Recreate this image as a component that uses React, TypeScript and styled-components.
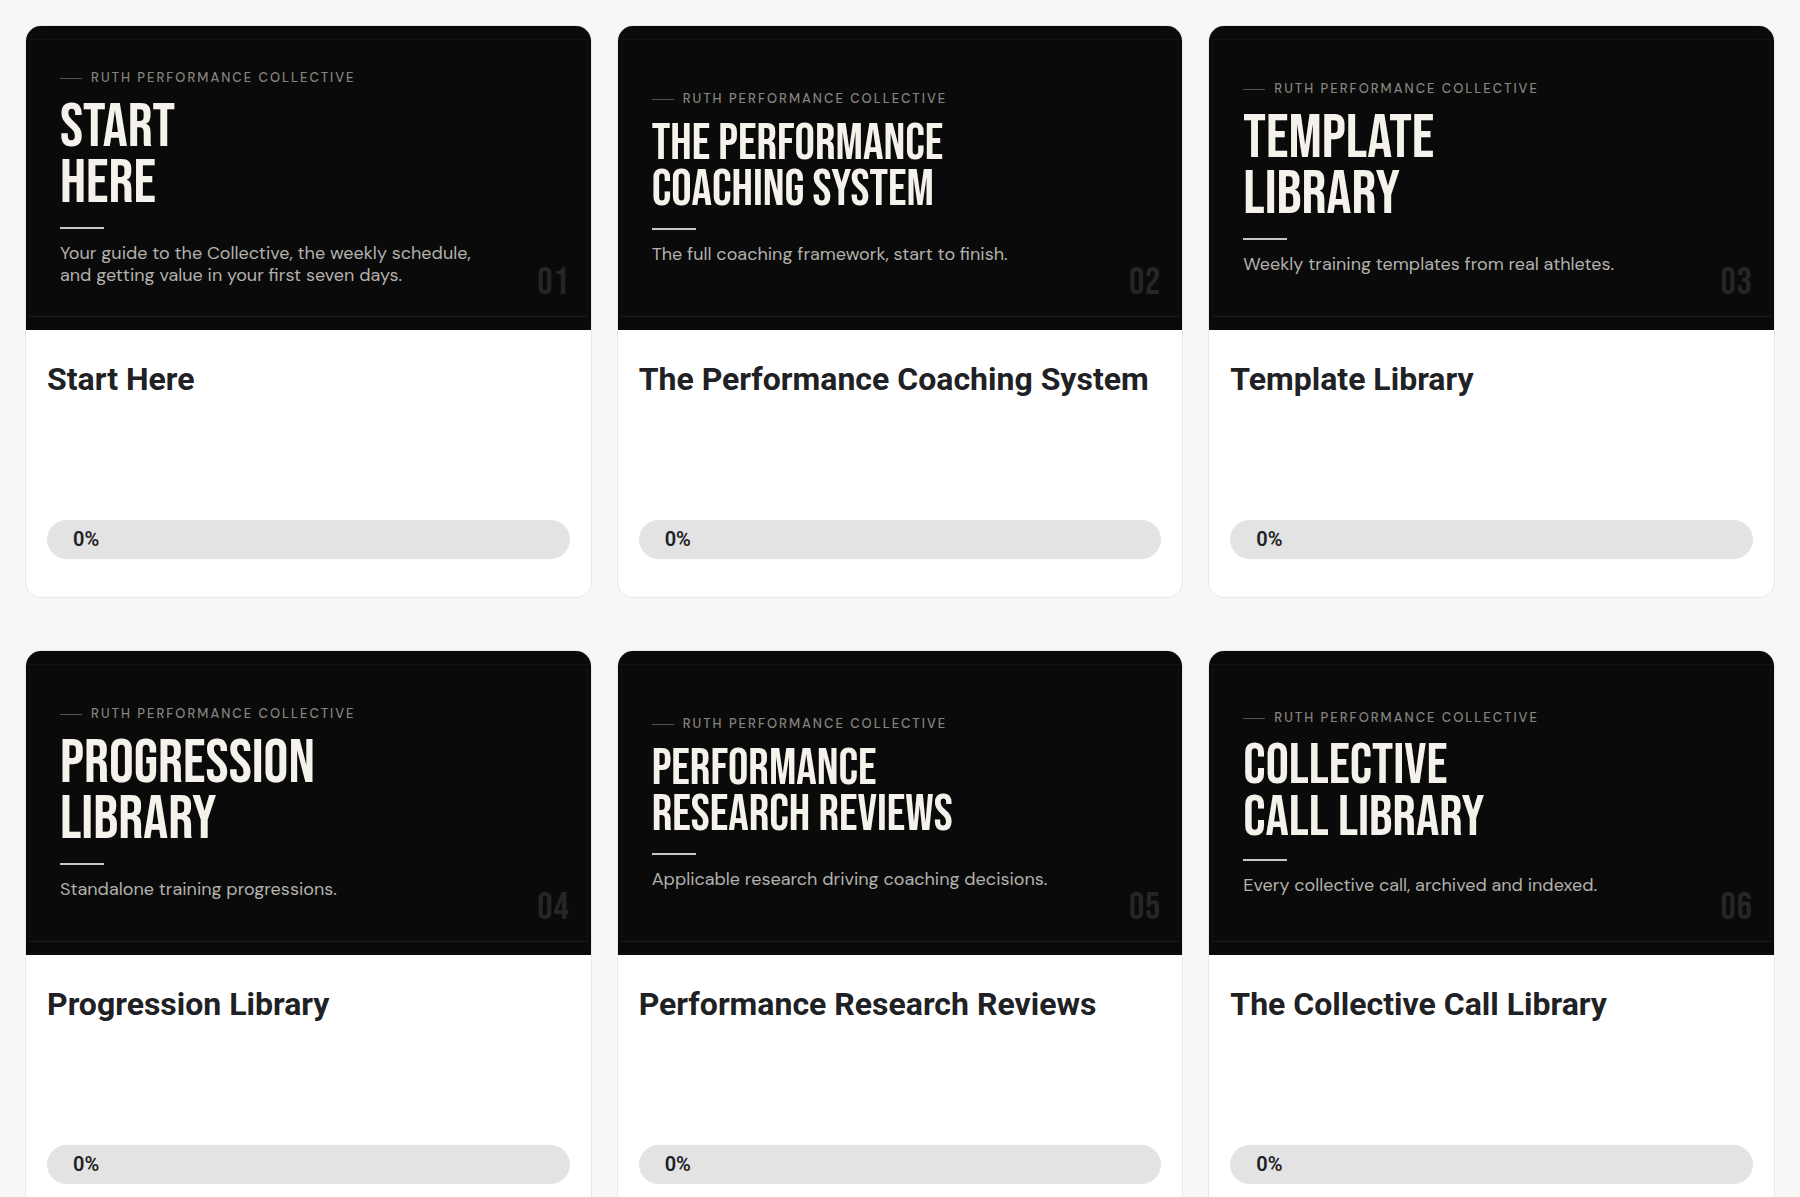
import React from "react";
import styled, { createGlobalStyle } from "styled-components";

const GlobalStyle = createGlobalStyle`
  *, *::before, *::after { box-sizing: border-box; }
  body {
    margin: 0;
    background: #f8f7f5;
    color: #202124;
    font-family: Roboto, "Liberation Sans", sans-serif;
  }
`;

const Grid = styled.main`
  display: grid;
  grid-template-columns: repeat(3, minmax(0, 1fr));
  column-gap: 25px;
  row-gap: 52px;
  padding: 25px;
`;

const Card = styled.article`
  display: flex;
  flex-direction: column;
  overflow: hidden;
  background: #ffffff;
  border: 1px solid #e8e8e7;
  border-radius: 16px;
`;

const Cover = styled.div`
  position: relative;
  aspect-ratio: 13 / 7;
  display: flex;
  flex-direction: column;
  justify-content: center;
  padding: 0 34px;
  background: #0a0a0a;
`;

const Frame = styled.div`
  position: absolute;
  inset: 13px 3px;
  border: 1px solid #121212;
  border-bottom-color: #1c1c1c;
  pointer-events: none;
`;

const Eyebrow = styled.div`
  display: flex;
  align-items: center;
  gap: 9px;
  margin-bottom: 14px;
  color: #85837e;
  font: 500 13px/16px "DM Sans", Inter, sans-serif;
  letter-spacing: 2px;
  text-transform: uppercase;

  &::before {
    content: "";
    width: 22px;
    height: 1px;
    background: #55534f;
  }
`;

type HeadlineSize = "large" | "medium" | "small";

const headlineFont: Record<HeadlineSize, string> = {
  large: "62px/56px",
  medium: "58px/52px",
  small: "51px/46px",
};

const Headline = styled.div<{ $size: HeadlineSize }>`
  color: #f5f2eb;
  font: 400 ${(p) => headlineFont[p.$size]} "Bebas Neue", "Liberation Sans Narrow", sans-serif;
  text-transform: uppercase;
  white-space: pre-line;
`;

const Rule = styled.div`
  width: 44px;
  height: 2px;
  margin: 15px 0 13px;
  background: #c9c7c1;
`;

const Blurb = styled.p`
  margin: 0;
  color: #b3b1ac;
  font: 400 18px/22px "DM Sans", Inter, sans-serif;
  white-space: pre-line;
`;

const Index = styled.span`
  position: absolute;
  right: 21px;
  bottom: 27px;
  color: #262626;
  font: 400 38px/40px "Bebas Neue", "Liberation Sans Narrow", sans-serif;
  letter-spacing: 1px;
`;

const Body = styled.div`
  display: flex;
  flex-direction: column;
  gap: 30px;
  padding: 30px 21px 38px;
`;

const Title = styled.h2`
  min-height: 130px;
  margin: 0;
  font-size: 32px;
  font-weight: 700;
  line-height: 38px;
`;

const Progress = styled.div`
  position: relative;
  overflow: hidden;
  height: 39px;
  border-radius: 20px;
  background: #e3e3e3;
`;

const ProgressFill = styled.div`
  position: absolute;
  inset: 0 auto 0 0;
  background: #c9c7c1;
`;

const ProgressText = styled.span`
  position: relative;
  display: block;
  padding: 0 26px;
  font-size: 20px;
  font-weight: 600;
  line-height: 39px;
`;

interface Course {
  title: string;
  headline: string;
  size: HeadlineSize;
  blurb: string;
  progress: number;
}

const courses: Course[] = [
  {
    title: "Start Here",
    headline: "Start\nHere",
    size: "large",
    blurb: "Your guide to the Collective, the weekly schedule,\nand getting value in your first seven days.",
    progress: 0,
  },
  {
    title: "The Performance Coaching System",
    headline: "The Performance\nCoaching System",
    size: "small",
    blurb: "The full coaching framework, start to finish.",
    progress: 0,
  },
  {
    title: "Template Library",
    headline: "Template\nLibrary",
    size: "large",
    blurb: "Weekly training templates from real athletes.",
    progress: 0,
  },
  {
    title: "Progression Library",
    headline: "Progression\nLibrary",
    size: "large",
    blurb: "Standalone training progressions.",
    progress: 0,
  },
  {
    title: "Performance Research Reviews",
    headline: "Performance\nResearch Reviews",
    size: "small",
    blurb: "Applicable research driving coaching decisions.",
    progress: 0,
  },
  {
    title: "The Collective Call Library",
    headline: "Collective\nCall Library",
    size: "medium",
    blurb: "Every collective call, archived and indexed.",
    progress: 0,
  },
];

function CourseCard({ course, number }: { course: Course; number: number }) {
  return (
    <Card>
      <Cover>
        <Frame />
        <Eyebrow>Ruth Performance Collective</Eyebrow>
        <Headline $size={course.size}>{course.headline}</Headline>
        <Rule />
        <Blurb>{course.blurb}</Blurb>
        <Index>{String(number).padStart(2, "0")}</Index>
      </Cover>
      <Body>
        <Title>{course.title}</Title>
        <Progress
          role="progressbar"
          aria-label={course.title}
          aria-valuemin={0}
          aria-valuemax={100}
          aria-valuenow={course.progress}
        >
          <ProgressFill style={{ width: `${course.progress}%` }} />
          <ProgressText>{course.progress}%</ProgressText>
        </Progress>
      </Body>
    </Card>
  );
}

export default function App() {
  return (
    <>
      <GlobalStyle />
      <Grid>
        {courses.map((course, i) => (
          <CourseCard key={course.title} course={course} number={i + 1} />
        ))}
      </Grid>
    </>
  );
}
